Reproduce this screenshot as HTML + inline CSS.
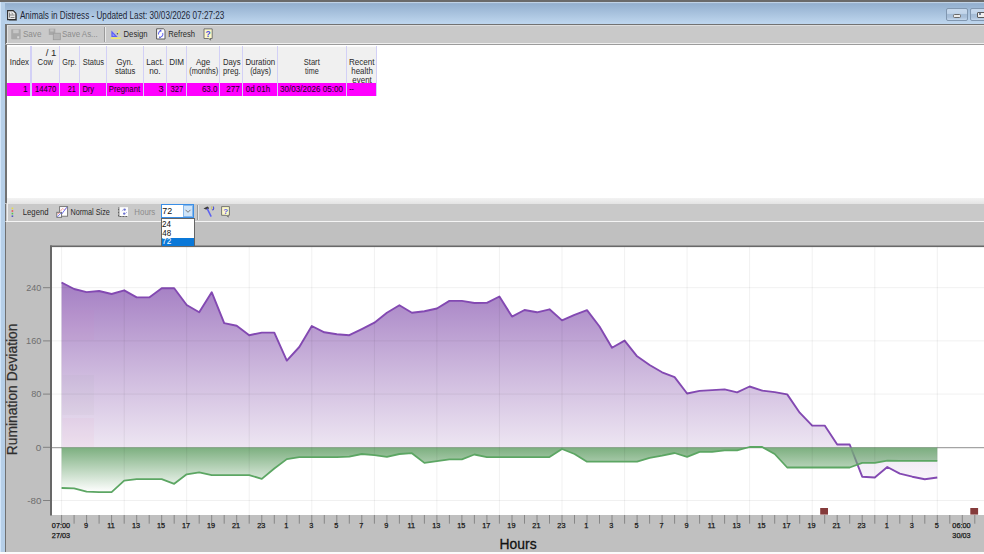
<!DOCTYPE html>
<html><head><meta charset="utf-8">
<style>
*{margin:0;padding:0;box-sizing:border-box}
html,body{width:984px;height:554px;overflow:hidden;background:#c0c0c0;font-family:"Liberation Sans",sans-serif;color:#222}
.a{position:absolute}
#topband{left:0;top:0;width:984px;height:2px;background:#6a6a6a}
#frameL{left:0;top:2px;width:5px;height:552px;background:linear-gradient(90deg,#d3e6fa 0,#d3e6fa 1.5px,#b6cfe8 1.5px)}
#title{left:0;top:2px;width:984px;height:22px;background:linear-gradient(#a9bdd2 0,#94b0cf 2px,#bdd5ed 21px)}
#titleTop{left:0;top:2px;width:984px;height:1px;background:#bfd2e6}
#tb1{left:5px;top:23.6px;width:979px;height:21px;background:#c9c9c9;border-top:1.5px solid #727272;border-left:2px solid #727272}
#tb1hl{left:6px;top:43px;width:978px;height:1px;background:#eeeeee}
#tb1dk{left:5px;top:44.2px;width:979px;height:1.6px;background:#9c9c9c}
#table{left:5px;top:45px;width:979px;height:158px;background:#fff;border-left:2px solid #727272}
#hdr{left:7px;top:46px;width:369px;height:37px;background:#f0f0f0;border-top:1px solid #fafafa;border-left:1px solid #fafafa}
#row{left:7px;top:83px;width:370px;height:13px;background:#ff00ff}
.div{position:absolute;top:46px;width:1.3px;height:50px;background:#d2d0f6}
#tb2{left:5px;top:203.8px;width:979px;height:17px;background:#c9c9c9;border-left:1.5px solid #727272}
#tb2hl{left:6px;top:221px;width:978px;height:1px;background:#f4f4f4}
#chartbg{left:4.6px;top:222px;width:979.4px;height:330px;background:#c0c0c0;border-left:1.5px solid #707070}
#bottomhl{left:0;top:551.6px;width:984px;height:3px;background:#fbfbfb}
</style></head>
<body>
<div class="a" id="chartbg"></div>
<svg width="984" height="554" viewBox="0 0 984 554" style="position:absolute;left:0;top:0">
<defs>
<linearGradient id="pg" x1="0" y1="282" x2="0" y2="480" gradientUnits="userSpaceOnUse">
<stop offset="0" stop-color="#a47ec3"/><stop offset="0.45" stop-color="#cdb8dd"/><stop offset="0.83" stop-color="#ede5f2"/><stop offset="1" stop-color="#f8f5fa"/>
</linearGradient>
<linearGradient id="gg" x1="0" y1="447" x2="0" y2="492" gradientUnits="userSpaceOnUse">
<stop offset="0" stop-color="#74aa77" stop-opacity="0.95"/><stop offset="1" stop-color="#70a774" stop-opacity="0"/>
</linearGradient>
</defs>
<rect x="52" y="247" width="932" height="268" fill="#fff"/>
<path d="M61.6,447.6 L61.6,282.5 74.1,289.0 86.6,292.1 99.1,291.0 111.6,294.0 124.2,290.3 136.7,297.4 149.2,297.4 161.7,288.3 174.2,288.3 186.7,305.0 199.2,312.3 211.7,292.2 224.2,323.1 236.7,325.7 249.2,335.2 261.8,332.6 274.3,332.6 286.8,360.6 299.3,347.0 311.8,326.0 324.3,332.3 336.8,334.2 349.3,335.2 361.8,329.1 374.4,322.7 386.9,312.8 399.4,305.2 411.9,312.8 424.4,311.3 436.9,308.5 449.4,300.9 461.9,300.9 474.4,303.0 486.9,302.9 499.4,296.5 512.0,316.6 524.5,310.0 537.0,312.3 549.5,309.3 562.0,320.4 574.5,314.8 587.0,310.2 599.5,326.5 612.0,347.8 624.6,340.6 637.1,356.3 649.6,365.0 662.1,372.3 674.6,377.2 687.1,393.5 699.6,390.9 712.1,390.1 724.6,389.4 737.1,392.4 749.6,386.5 762.2,390.6 774.7,392.1 787.2,394.4 799.7,412.7 812.2,425.6 824.7,425.6 837.2,444.5 849.7,444.5 862.2,476.7 874.8,477.5 887.3,467.0 899.8,473.7 912.3,476.7 924.8,479.2 937.3,477.5 L937.3,447.6 Z" fill="url(#pg)"/>
<line x1="52" y1="447.6" x2="984" y2="447.6" stroke="#a4a4a4" stroke-width="1.3"/>
<polyline points="61.6,282.5 74.1,289.0 86.6,292.1 99.1,291.0 111.6,294.0 124.2,290.3 136.7,297.4 149.2,297.4 161.7,288.3 174.2,288.3 186.7,305.0 199.2,312.3 211.7,292.2 224.2,323.1 236.7,325.7 249.2,335.2 261.8,332.6 274.3,332.6 286.8,360.6 299.3,347.0 311.8,326.0 324.3,332.3 336.8,334.2 349.3,335.2 361.8,329.1 374.4,322.7 386.9,312.8 399.4,305.2 411.9,312.8 424.4,311.3 436.9,308.5 449.4,300.9 461.9,300.9 474.4,303.0 486.9,302.9 499.4,296.5 512.0,316.6 524.5,310.0 537.0,312.3 549.5,309.3 562.0,320.4 574.5,314.8 587.0,310.2 599.5,326.5 612.0,347.8 624.6,340.6 637.1,356.3 649.6,365.0 662.1,372.3 674.6,377.2 687.1,393.5 699.6,390.9 712.1,390.1 724.6,389.4 737.1,392.4 749.6,386.5 762.2,390.6 774.7,392.1 787.2,394.4 799.7,412.7 812.2,425.6 824.7,425.6 837.2,444.5 849.7,444.5 862.2,476.7 874.8,477.5 887.3,467.0 899.8,473.7 912.3,476.7 924.8,479.2 937.3,477.5" fill="none" stroke="#8349b2" stroke-width="1.9" stroke-linejoin="round"/>
<path d="M61.6,447.6 L61.6,488.0 74.1,488.4 86.6,491.7 99.1,492.2 111.6,492.2 124.2,480.7 136.7,479.2 149.2,479.2 161.7,479.2 174.2,483.8 186.7,474.3 199.2,472.3 211.7,475.1 224.2,475.1 236.7,475.1 249.2,475.1 261.8,478.9 274.3,468.5 286.8,459.1 299.3,457.1 311.8,457.1 324.3,457.1 336.8,457.1 349.3,456.6 361.8,454.0 374.4,455.2 386.9,456.8 399.4,454.0 411.9,453.2 424.4,462.9 436.9,461.2 449.4,459.4 461.9,459.4 474.4,454.5 486.9,457.1 499.4,457.1 512.0,457.1 524.5,457.1 537.0,457.1 549.5,457.1 562.0,449.0 574.5,454.0 587.0,461.7 599.5,461.7 612.0,461.7 624.6,461.7 637.1,461.7 649.6,457.9 662.1,455.6 674.6,453.0 687.1,456.8 699.6,451.8 712.1,451.8 724.6,450.3 737.1,450.3 749.6,447.0 762.2,447.0 774.7,454.0 787.2,467.5 799.7,467.5 812.2,467.5 824.7,467.5 837.2,467.5 849.7,467.5 862.2,462.9 874.8,462.9 887.3,460.6 899.8,460.8 912.3,460.8 924.8,460.8 937.3,460.8 L937.3,447.6 Z" fill="url(#gg)"/>
<g stroke="#000" stroke-opacity="0.06" stroke-width="1"><line x1="61.6" y1="247" x2="61.6" y2="515" /><line x1="124.2" y1="247" x2="124.2" y2="515" /><line x1="186.7" y1="247" x2="186.7" y2="515" /><line x1="249.2" y1="247" x2="249.2" y2="515" /><line x1="311.8" y1="247" x2="311.8" y2="515" /><line x1="374.4" y1="247" x2="374.4" y2="515" /><line x1="436.9" y1="247" x2="436.9" y2="515" /><line x1="499.4" y1="247" x2="499.4" y2="515" /><line x1="562.0" y1="247" x2="562.0" y2="515" /><line x1="624.6" y1="247" x2="624.6" y2="515" /><line x1="687.1" y1="247" x2="687.1" y2="515" /><line x1="749.6" y1="247" x2="749.6" y2="515" /><line x1="812.2" y1="247" x2="812.2" y2="515" /><line x1="874.8" y1="247" x2="874.8" y2="515" /><line x1="937.3" y1="247" x2="937.3" y2="515" /><line x1="52" y1="287.7" x2="984" y2="287.7" /><line x1="52" y1="340.9" x2="984" y2="340.9" /><line x1="52" y1="394.1" x2="984" y2="394.1" /><line x1="52" y1="500.5" x2="984" y2="500.5" /></g>
<rect x="62.5" y="310" width="31.5" height="30" fill="#e070b0" opacity="0.045"/>
<rect x="62.5" y="375" width="31.5" height="40" fill="#708070" opacity="0.035"/>
<rect x="62.5" y="418" width="31.5" height="29" fill="#f090b0" opacity="0.06"/>
<polyline points="61.6,488.0 74.1,488.4 86.6,491.7 99.1,492.2 111.6,492.2 124.2,480.7 136.7,479.2 149.2,479.2 161.7,479.2 174.2,483.8 186.7,474.3 199.2,472.3 211.7,475.1 224.2,475.1 236.7,475.1 249.2,475.1 261.8,478.9 274.3,468.5 286.8,459.1 299.3,457.1 311.8,457.1 324.3,457.1 336.8,457.1 349.3,456.6 361.8,454.0 374.4,455.2 386.9,456.8 399.4,454.0 411.9,453.2 424.4,462.9 436.9,461.2 449.4,459.4 461.9,459.4 474.4,454.5 486.9,457.1 499.4,457.1 512.0,457.1 524.5,457.1 537.0,457.1 549.5,457.1 562.0,449.0 574.5,454.0 587.0,461.7 599.5,461.7 612.0,461.7 624.6,461.7 637.1,461.7 649.6,457.9 662.1,455.6 674.6,453.0 687.1,456.8 699.6,451.8 712.1,451.8 724.6,450.3 737.1,450.3 749.6,447.0 762.2,447.0 774.7,454.0 787.2,467.5 799.7,467.5 812.2,467.5 824.7,467.5 837.2,467.5 849.7,467.5 862.2,462.9 874.8,462.9 887.3,460.6 899.8,460.8 912.3,460.8 924.8,460.8 937.3,460.8" fill="none" stroke="#5ca663" stroke-width="1.8" stroke-linejoin="round"/>
<rect x="50" y="245.5" width="934" height="1.6" fill="#686868"/>
<rect x="50" y="245.5" width="2" height="270" fill="#686868"/>
<g stroke="#808080" stroke-width="1"><line x1="43" y1="287.7" x2="50" y2="287.7"/><line x1="43" y1="340.9" x2="50" y2="340.9"/><line x1="43" y1="394.1" x2="50" y2="394.1"/><line x1="43" y1="447.3" x2="50" y2="447.3"/><line x1="43" y1="500.5" x2="50" y2="500.5"/></g>
<g font-family="Liberation Sans"><text x="26.35" y="290.90" font-size="9.3" fill="#6e6e6e" textLength="15.00" lengthAdjust="spacingAndGlyphs">240</text><text x="26.10" y="344.10" font-size="9.3" fill="#6e6e6e" textLength="15.25" lengthAdjust="spacingAndGlyphs">160</text><text x="31.13" y="397.30" font-size="9.3" fill="#6e6e6e" textLength="10.23" lengthAdjust="spacingAndGlyphs">80</text><text x="35.88" y="450.50" font-size="9.3" fill="#6e6e6e" textLength="5.51" lengthAdjust="spacingAndGlyphs">0</text><text x="27.16" y="503.70" font-size="9.3" fill="#6e6e6e" textLength="14.22" lengthAdjust="spacingAndGlyphs">-80</text></g>
<g stroke="#808080" stroke-width="0.9"><line x1="61.6" y1="515" x2="61.6" y2="523.7" /><line x1="74.1" y1="515" x2="74.1" y2="523.7" /><line x1="86.6" y1="515" x2="86.6" y2="523.7" /><line x1="99.1" y1="515" x2="99.1" y2="523.7" /><line x1="111.6" y1="515" x2="111.6" y2="523.7" /><line x1="124.2" y1="515" x2="124.2" y2="523.7" /><line x1="136.7" y1="515" x2="136.7" y2="523.7" /><line x1="149.2" y1="515" x2="149.2" y2="523.7" /><line x1="161.7" y1="515" x2="161.7" y2="523.7" /><line x1="174.2" y1="515" x2="174.2" y2="523.7" /><line x1="186.7" y1="515" x2="186.7" y2="523.7" /><line x1="199.2" y1="515" x2="199.2" y2="523.7" /><line x1="211.7" y1="515" x2="211.7" y2="523.7" /><line x1="224.2" y1="515" x2="224.2" y2="523.7" /><line x1="236.7" y1="515" x2="236.7" y2="523.7" /><line x1="249.2" y1="515" x2="249.2" y2="523.7" /><line x1="261.8" y1="515" x2="261.8" y2="523.7" /><line x1="274.3" y1="515" x2="274.3" y2="523.7" /><line x1="286.8" y1="515" x2="286.8" y2="523.7" /><line x1="299.3" y1="515" x2="299.3" y2="523.7" /><line x1="311.8" y1="515" x2="311.8" y2="523.7" /><line x1="324.3" y1="515" x2="324.3" y2="523.7" /><line x1="336.8" y1="515" x2="336.8" y2="523.7" /><line x1="349.3" y1="515" x2="349.3" y2="523.7" /><line x1="361.8" y1="515" x2="361.8" y2="523.7" /><line x1="374.4" y1="515" x2="374.4" y2="523.7" /><line x1="386.9" y1="515" x2="386.9" y2="523.7" /><line x1="399.4" y1="515" x2="399.4" y2="523.7" /><line x1="411.9" y1="515" x2="411.9" y2="523.7" /><line x1="424.4" y1="515" x2="424.4" y2="523.7" /><line x1="436.9" y1="515" x2="436.9" y2="523.7" /><line x1="449.4" y1="515" x2="449.4" y2="523.7" /><line x1="461.9" y1="515" x2="461.9" y2="523.7" /><line x1="474.4" y1="515" x2="474.4" y2="523.7" /><line x1="486.9" y1="515" x2="486.9" y2="523.7" /><line x1="499.4" y1="515" x2="499.4" y2="523.7" /><line x1="512.0" y1="515" x2="512.0" y2="523.7" /><line x1="524.5" y1="515" x2="524.5" y2="523.7" /><line x1="537.0" y1="515" x2="537.0" y2="523.7" /><line x1="549.5" y1="515" x2="549.5" y2="523.7" /><line x1="562.0" y1="515" x2="562.0" y2="523.7" /><line x1="574.5" y1="515" x2="574.5" y2="523.7" /><line x1="587.0" y1="515" x2="587.0" y2="523.7" /><line x1="599.5" y1="515" x2="599.5" y2="523.7" /><line x1="612.0" y1="515" x2="612.0" y2="523.7" /><line x1="624.6" y1="515" x2="624.6" y2="523.7" /><line x1="637.1" y1="515" x2="637.1" y2="523.7" /><line x1="649.6" y1="515" x2="649.6" y2="523.7" /><line x1="662.1" y1="515" x2="662.1" y2="523.7" /><line x1="674.6" y1="515" x2="674.6" y2="523.7" /><line x1="687.1" y1="515" x2="687.1" y2="523.7" /><line x1="699.6" y1="515" x2="699.6" y2="523.7" /><line x1="712.1" y1="515" x2="712.1" y2="523.7" /><line x1="724.6" y1="515" x2="724.6" y2="523.7" /><line x1="737.1" y1="515" x2="737.1" y2="523.7" /><line x1="749.6" y1="515" x2="749.6" y2="523.7" /><line x1="762.2" y1="515" x2="762.2" y2="523.7" /><line x1="774.7" y1="515" x2="774.7" y2="523.7" /><line x1="787.2" y1="515" x2="787.2" y2="523.7" /><line x1="799.7" y1="515" x2="799.7" y2="523.7" /><line x1="812.2" y1="515" x2="812.2" y2="523.7" /><line x1="824.7" y1="515" x2="824.7" y2="523.7" /><line x1="837.2" y1="515" x2="837.2" y2="523.7" /><line x1="849.7" y1="515" x2="849.7" y2="523.7" /><line x1="862.2" y1="515" x2="862.2" y2="523.7" /><line x1="874.8" y1="515" x2="874.8" y2="523.7" /><line x1="887.3" y1="515" x2="887.3" y2="523.7" /><line x1="899.8" y1="515" x2="899.8" y2="523.7" /><line x1="912.3" y1="515" x2="912.3" y2="523.7" /><line x1="924.8" y1="515" x2="924.8" y2="523.7" /><line x1="937.3" y1="515" x2="937.3" y2="523.7" /><line x1="949.8" y1="515" x2="949.8" y2="523.7" /><line x1="962.3" y1="515" x2="962.3" y2="523.7" /><line x1="974.8" y1="515" x2="974.8" y2="523.7" /></g>
<g font-family="Liberation Sans" font-size="7.3" fill="#161616" stroke="#161616" stroke-width="0.25" text-anchor="middle"><text x="61.0" y="528.3">07:00</text><text x="61.0" y="538.0">27/03</text><text x="86.0" y="528.3">9</text><text x="111.0" y="528.3">11</text><text x="136.1" y="528.3">13</text><text x="161.1" y="528.3">15</text><text x="186.1" y="528.3">17</text><text x="211.1" y="528.3">19</text><text x="236.1" y="528.3">21</text><text x="261.2" y="528.3">23</text><text x="286.2" y="528.3">1</text><text x="311.2" y="528.3">3</text><text x="336.2" y="528.3">5</text><text x="361.2" y="528.3">7</text><text x="386.3" y="528.3">9</text><text x="411.3" y="528.3">11</text><text x="436.3" y="528.3">13</text><text x="461.3" y="528.3">15</text><text x="486.3" y="528.3">17</text><text x="511.4" y="528.3">19</text><text x="536.4" y="528.3">21</text><text x="561.4" y="528.3">23</text><text x="586.4" y="528.3">1</text><text x="611.4" y="528.3">3</text><text x="636.5" y="528.3">5</text><text x="661.5" y="528.3">7</text><text x="686.5" y="528.3">9</text><text x="711.5" y="528.3">11</text><text x="736.5" y="528.3">13</text><text x="761.6" y="528.3">15</text><text x="786.6" y="528.3">17</text><text x="811.6" y="528.3">19</text><text x="836.6" y="528.3">21</text><text x="861.6" y="528.3">23</text><text x="886.7" y="528.3">1</text><text x="911.7" y="528.3">3</text><text x="936.7" y="528.3">5</text><text x="961.5" y="528.3">06:00</text><text x="961.5" y="538.0">30/03</text></g>
<rect x="820.2" y="508" width="7.8" height="6.6" fill="#853b3b"/>
<rect x="970.3" y="508" width="7.8" height="6.6" fill="#853b3b"/>
</svg>
<div class="a" id="topband"></div>
<div class="a" id="title"></div>
<div class="a" id="titleTop"></div>
<div class="a" id="frameL"></div>
<div class="a" id="bottomhl"></div>
<!-- min/max buttons -->
<div class="a" style="left:946.3px;top:8.3px;width:21.4px;height:12.5px;border:1px solid #8197b0;border-radius:2px;background:linear-gradient(#c6d8ec 0,#c2d5ea 40%,#a3bbd5 48%,#a9c0da 75%,#c4d7ec 100%)"></div>
<div class="a" style="left:952.8px;top:14.4px;width:7.8px;height:3.2px;border-radius:1.5px;background:#ececec;border:0.8px solid #6a6a6a"></div>
<div class="a" style="left:970.4px;top:8.3px;width:20px;height:12.5px;border:1px solid #8197b0;border-radius:2px;background:linear-gradient(#c6d8ec 0,#c2d5ea 40%,#a3bbd5 48%,#a9c0da 75%,#c4d7ec 100%)"></div>
<div class="a" style="left:977.4px;top:11.5px;width:9px;height:6.3px;background:#f0f0f0;border:1px solid #5a5a5a;border-radius:1px"></div>
<div class="a" style="left:978.8px;top:13.3px;width:2.6px;height:2.2px;background:#4a5a78;border-radius:1px"></div>

<!-- toolbar 1 -->
<div class="a" id="tb1"></div>
<div class="a" id="tb1hl"></div>
<div class="a" style="left:7px;top:25px;width:977px;height:1px;background:#dedede"></div>
<div class="a" style="left:7px;top:25px;width:1px;height:18px;background:#e2e2e2"></div>
<div class="a" id="tb1dk"></div>
<div class="a" style="left:104px;top:27px;width:1px;height:15px;background:#9a9a9a"></div>
<div class="a" style="left:105px;top:27px;width:1px;height:15px;background:#e8e8e8"></div>

<!-- table -->
<div class="a" id="table"></div>
<div class="a" id="hdr"></div>
<div class="a" id="row"></div>
<div class="div" style="left:30.3px"></div>
<div class="div" style="left:58.7px"></div>
<div class="div" style="left:78.6px"></div>
<div class="div" style="left:105.7px"></div>
<div class="div" style="left:143px"></div>
<div class="div" style="left:166px"></div>
<div class="div" style="left:185.8px"></div>
<div class="div" style="left:219.2px"></div>
<div class="div" style="left:242px"></div>
<div class="div" style="left:276.5px"></div>
<div class="div" style="left:346.1px"></div>
<div class="div" style="left:375.7px"></div>

<!-- toolbar 2 -->
<div class="a" style="left:7px;top:197.8px;width:977px;height:6px;background:linear-gradient(#f3f3f3,#e4e4e4)"></div>
<div class="a" id="tb2"></div>
<div class="a" style="left:6.5px;top:198px;width:1px;height:23px;background:#efefef"></div>
<div class="a" id="tb2hl"></div>
<!-- combo -->
<div class="a" style="left:161px;top:204px;width:33px;height:14px;background:#fff;border:1px solid #3a8ee6"></div>
<div class="a" style="left:183.3px;top:205.3px;width:9.5px;height:11.5px;background:#cfe4f8;border:1px solid #86b8ec"></div>
<div class="a" style="left:197.3px;top:205px;width:1px;height:15px;background:#9a9a9a"></div>
<div class="a" style="left:198.3px;top:205px;width:1px;height:15px;background:#e6e6e6"></div>
<!-- dropdown list -->
<div class="a" style="left:161px;top:218.3px;width:33.7px;height:28px;background:#fff;border:1px solid #646464"></div>
<div class="a" style="left:161.8px;top:237.5px;width:32px;height:8.3px;background:#0a78d8"></div>

<svg width="984" height="554" viewBox="0 0 984 554" style="position:absolute;left:0;top:0">
<!-- title icon -->
<path d="M8.3,11.3 h5.4 l2.5,2.5 v6.4 h-7.9 z" fill="#3a3a3a" opacity="0.55" transform="translate(0.8,0.6)"/>
<path d="M7.6,10.6 h5.6 l2.7,2.7 v6.3 h-8.3 z" fill="#e9e9e9" stroke="#2e2e2e" stroke-width="1.1"/>
<path d="M9.5,12.6 v5 M9.5,15 h5 M10.5,17.5 h4 M11.5,13 l1.5,1.2" stroke="#777" stroke-width="0.9"/>
<!-- save -->
<rect x="11.2" y="29.2" width="9.5" height="10" rx="0.6" fill="#a9a9a9"/>
<rect x="13.2" y="29.6" width="5.5" height="3.6" fill="#c6c6c6"/>
<rect x="17.2" y="36.3" width="2" height="2" fill="#d6d6d6"/>
<!-- save as -->
<rect x="48.8" y="28.7" width="6.5" height="6.2" fill="#a8a8a8"/>
<rect x="50.2" y="29.3" width="3.5" height="2.2" fill="#c4c4c4"/>
<rect x="53.3" y="33.2" width="7" height="6.5" fill="#b5b5b5" stroke="#9c9c9c" stroke-width="0.8"/>
<!-- design -->
<path d="M111.4,30.6 L111.4,36.9 L117.7,36.9 Z" fill="#5a5ff8"/>
<path d="M112.6,33.6 L112.6,35.8 L114.8,35.8 Z" fill="#a8acf5"/>
<path d="M117.3,33.6 L119.8,30.1" stroke="#e8e470" stroke-width="1.4"/>
<circle cx="117.4" cy="33.7" r="0.8" fill="#555"/>
<rect x="111" y="37.4" width="9.8" height="1.6" fill="#ece870"/>
<!-- refresh -->
<path d="M156.6,28.8 h6.8 l1.6,1.6 v8.6 h-8.4 z" fill="#fff" stroke="#5a5a5a" stroke-width="1"/>
<path d="M158.6,34.5 a2.4,2.6 0 0 1 2.2,-3.4 M162.6,33 a2.4,2.6 0 0 1 -2,3.8" fill="none" stroke="#6a6ef0" stroke-width="1.1"/>
<path d="M159.4,30.4 l1.8,-0.9 l0.3,2.2 z M161.2,37.6 l-1.8,0.8 l-0.3,-2.2 z" fill="#4a50d8"/>
<!-- help 1 -->
<path d="M204,28.9 h8.2 v9.6 h-2.2 l0.8,1.6 l-2.2,-1.6 h-4.6 z" fill="#fcf9c8" stroke="#6a6a6a" stroke-width="0.9"/>
<text x="208.1" y="36.6" font-family="Liberation Sans" font-weight="bold" font-size="8.5" fill="#4a50e0" text-anchor="middle">?</text>
<!-- legend dots -->
<rect x="11.6" y="207.6" width="1.6" height="1.6" fill="#e8e040"/>
<rect x="11.6" y="210.2" width="1.6" height="1.6" fill="#e85050"/>
<rect x="11.6" y="212.8" width="1.6" height="1.6" fill="#50c850"/>
<rect x="11.6" y="215.4" width="1.6" height="1.6" fill="#5058c0"/>
<!-- normal size -->
<rect x="59.6" y="206.6" width="8" height="9.6" fill="#fff" stroke="#707070" stroke-width="0.9"/>
<path d="M60.5,211 L62.5,208.5 L64.5,210 L66.5,208" fill="none" stroke="#f07070" stroke-width="0.9" stroke-dasharray="1,0.6"/>
<path d="M61,215 L66.8,207.2" stroke="#6a6ef0" stroke-width="1"/>
<rect x="56.8" y="212.3" width="4.8" height="5" fill="#fff" stroke="#6a6a6a" stroke-width="0.9"/>
<path d="M57.3,216.8 L61.3,212.8" stroke="#6a6ef0" stroke-width="0.9"/>
<path d="M57.4,214 L59.5,213" stroke="#f07070" stroke-width="0.7"/>
<!-- hours icon -->
<rect x="120" y="207.2" width="8" height="8.8" fill="#fdfdfd"/>
<path d="M118.6,207.5 v9 h9" fill="none" stroke="#4a4a4a" stroke-width="0.9" stroke-dasharray="1,0.5"/>
<circle cx="124.6" cy="209.6" r="1.2" fill="#6a70d0"/>
<circle cx="124.2" cy="213.6" r="1.2" fill="#6a70d0"/>
<path d="M121.8,211 l1.6,-1.5 M127,212 l-1.6,1.6" stroke="#9aa0e8" stroke-width="0.8"/>
<!-- chevron -->
<path d="M185.5,209.8 L188,212.3 L190.5,209.8" fill="none" stroke="#6a6a6a" stroke-width="0.9"/>
<!-- hammer -->
<path d="M203.5,208.6 L207.3,206.6 L208.6,207.2 L208.8,209 L206,209.5 Z" fill="#3a3a3a"/>
<path d="M207.2,208.6 L211.2,216.6" stroke="#5c62f0" stroke-width="1.5"/>
<path d="M211.8,206.2 v3.5" stroke="#c8c060" stroke-width="1"/>
<path d="M213.2,206.5 q1,1.5 0.2,3 l-1.3,0.6" fill="none" stroke="#4a50d8" stroke-width="1.1"/>
<!-- help 2 -->
<path d="M221.6,206.6 h7.8 v8.7 h-1.8 l0.9,1.8 l-2.4,-1.8 h-4.5 z" fill="#fcf9c8" stroke="#6a6a6a" stroke-width="0.9"/>
<text x="225.6" y="213.7" font-family="Liberation Sans" font-weight="bold" font-size="8" fill="#5a60e8" text-anchor="middle">?</text>
</svg>
<svg width="984" height="554" viewBox="0 0 984 554" style="position:absolute;left:0;top:0" font-family="Liberation Sans"><text x="19.88" y="18.60" font-size="10" fill="#1d2636" textLength="204.47" lengthAdjust="spacingAndGlyphs">Animals in Distress - Updated Last: 30/03/2026 07:27:23</text><text x="22.93" y="37.40" font-size="9.9" fill="#8c8c8c" textLength="18.53" lengthAdjust="spacingAndGlyphs">Save</text><text x="62.04" y="37.40" font-size="9.9" fill="#8c8c8c" textLength="35.67" lengthAdjust="spacingAndGlyphs">Save As...</text><text x="123.57" y="37.40" font-size="9.9" fill="#2a2a2a" textLength="23.93" lengthAdjust="spacingAndGlyphs">Design</text><text x="168.37" y="37.40" font-size="9.9" fill="#2a2a2a" textLength="26.72" lengthAdjust="spacingAndGlyphs">Refresh</text><text x="9.77" y="64.90" font-size="9.2" fill="#2a2a2a" textLength="19.31" lengthAdjust="spacingAndGlyphs">Index</text><text x="45.70" y="55.90" font-size="9.2" fill="#2a2a2a" textLength="10.77" lengthAdjust="spacingAndGlyphs">/ 1</text><text x="37.61" y="64.90" font-size="9.2" fill="#2a2a2a" textLength="15.37" lengthAdjust="spacingAndGlyphs">Cow</text><text x="62.33" y="64.90" font-size="9.2" fill="#2a2a2a" textLength="14.13" lengthAdjust="spacingAndGlyphs">Grp.</text><text x="82.66" y="64.90" font-size="9.2" fill="#2a2a2a" textLength="21.31" lengthAdjust="spacingAndGlyphs">Status</text><text x="116.41" y="64.90" font-size="9.2" fill="#2a2a2a" textLength="16.51" lengthAdjust="spacingAndGlyphs">Gyn.</text><text x="115.09" y="73.90" font-size="9.2" fill="#2a2a2a" textLength="20.29" lengthAdjust="spacingAndGlyphs">status</text><text x="146.13" y="64.90" font-size="9.2" fill="#2a2a2a" textLength="17.83" lengthAdjust="spacingAndGlyphs">Lact.</text><text x="149.16" y="73.90" font-size="9.2" fill="#2a2a2a" textLength="11.39" lengthAdjust="spacingAndGlyphs">no.</text><text x="169.24" y="64.90" font-size="9.2" fill="#2a2a2a" textLength="14.83" lengthAdjust="spacingAndGlyphs">DIM</text><text x="195.98" y="64.90" font-size="9.2" fill="#2a2a2a" textLength="14.37" lengthAdjust="spacingAndGlyphs">Age</text><text x="189.25" y="73.90" font-size="9.2" fill="#2a2a2a" textLength="28.91" lengthAdjust="spacingAndGlyphs">(months)</text><text x="222.97" y="64.90" font-size="9.2" fill="#2a2a2a" textLength="17.61" lengthAdjust="spacingAndGlyphs">Days</text><text x="223.11" y="73.90" font-size="9.2" fill="#2a2a2a" textLength="17.39" lengthAdjust="spacingAndGlyphs">preg.</text><text x="245.45" y="64.90" font-size="9.2" fill="#2a2a2a" textLength="29.76" lengthAdjust="spacingAndGlyphs">Duration</text><text x="250.14" y="73.90" font-size="9.2" fill="#2a2a2a" textLength="20.83" lengthAdjust="spacingAndGlyphs">(days)</text><text x="303.76" y="64.90" font-size="9.2" fill="#2a2a2a" textLength="16.00" lengthAdjust="spacingAndGlyphs">Start</text><text x="305.09" y="73.90" font-size="9.2" fill="#2a2a2a" textLength="13.53" lengthAdjust="spacingAndGlyphs">time</text><text x="348.94" y="64.90" font-size="9.2" fill="#2a2a2a" textLength="25.62" lengthAdjust="spacingAndGlyphs">Recent</text><text x="351.25" y="73.90" font-size="9.2" fill="#2a2a2a" textLength="21.56" lengthAdjust="spacingAndGlyphs">health</text><text x="352.36" y="82.90" font-size="9.2" fill="#2a2a2a" textLength="19.39" lengthAdjust="spacingAndGlyphs">event</text><text x="22.96" y="92.40" font-size="9.0" fill="#200020" textLength="4.64" lengthAdjust="spacingAndGlyphs">1</text><text x="35.01" y="92.40" font-size="9.0" fill="#200020" textLength="21.39" lengthAdjust="spacingAndGlyphs">14470</text><text x="67.64" y="92.40" font-size="9.0" fill="#200020" textLength="8.01" lengthAdjust="spacingAndGlyphs">21</text><text x="82.38" y="92.40" font-size="9.0" fill="#200020" textLength="11.73" lengthAdjust="spacingAndGlyphs">Dry</text><text x="108.87" y="92.40" font-size="9.0" fill="#200020" textLength="31.19" lengthAdjust="spacingAndGlyphs">Pregnant</text><text x="158.45" y="92.40" font-size="9.0" fill="#200020" textLength="5.16" lengthAdjust="spacingAndGlyphs">3</text><text x="170.61" y="92.40" font-size="9.0" fill="#200020" textLength="12.78" lengthAdjust="spacingAndGlyphs">327</text><text x="201.89" y="92.40" font-size="9.0" fill="#200020" textLength="15.62" lengthAdjust="spacingAndGlyphs">63.0</text><text x="226.29" y="92.40" font-size="9.0" fill="#200020" textLength="13.51" lengthAdjust="spacingAndGlyphs">277</text><text x="245.79" y="92.40" font-size="9.0" fill="#200020" textLength="24.33" lengthAdjust="spacingAndGlyphs">0d 01h</text><text x="279.99" y="92.40" font-size="9.0" fill="#200020" textLength="63.02" lengthAdjust="spacingAndGlyphs">30/03/2026 05:00</text><text x="349.19" y="92.40" font-size="9.0" fill="#200020" textLength="4.62" lengthAdjust="spacingAndGlyphs">--</text><text x="22.77" y="214.90" font-size="9.4" fill="#2a2a2a" textLength="25.73" lengthAdjust="spacingAndGlyphs">Legend</text><text x="70.41" y="214.90" font-size="9.4" fill="#2a2a2a" textLength="39.42" lengthAdjust="spacingAndGlyphs">Normal Size</text><text x="134.36" y="214.90" font-size="9.4" fill="#8c8c8c" textLength="20.93" lengthAdjust="spacingAndGlyphs">Hours</text><text x="162.24" y="214.40" font-size="9.0" fill="#111" textLength="9.90" lengthAdjust="spacingAndGlyphs">72</text><text x="162.10" y="227.10" font-size="9.0" fill="#111" textLength="8.94" lengthAdjust="spacingAndGlyphs">24</text><text x="162.32" y="235.60" font-size="9.0" fill="#111" textLength="8.83" lengthAdjust="spacingAndGlyphs">48</text><text x="162.08" y="244.40" font-size="9.0" fill="#fff" textLength="9.13" lengthAdjust="spacingAndGlyphs">72</text><text x="499.56" y="548.60" font-size="14.7" fill="#111" textLength="37.04" lengthAdjust="spacingAndGlyphs" stroke="#111" stroke-width="0.3">Hours</text><g transform="translate(16.6,454.2) rotate(-90)"><text x="-1.14" y="0.00" font-size="15.3" fill="#2e2e2e" textLength="131.84" lengthAdjust="spacingAndGlyphs" stroke="#2e2e2e" stroke-width="0.2">Rumination Deviation</text></g></svg>
</body></html>
